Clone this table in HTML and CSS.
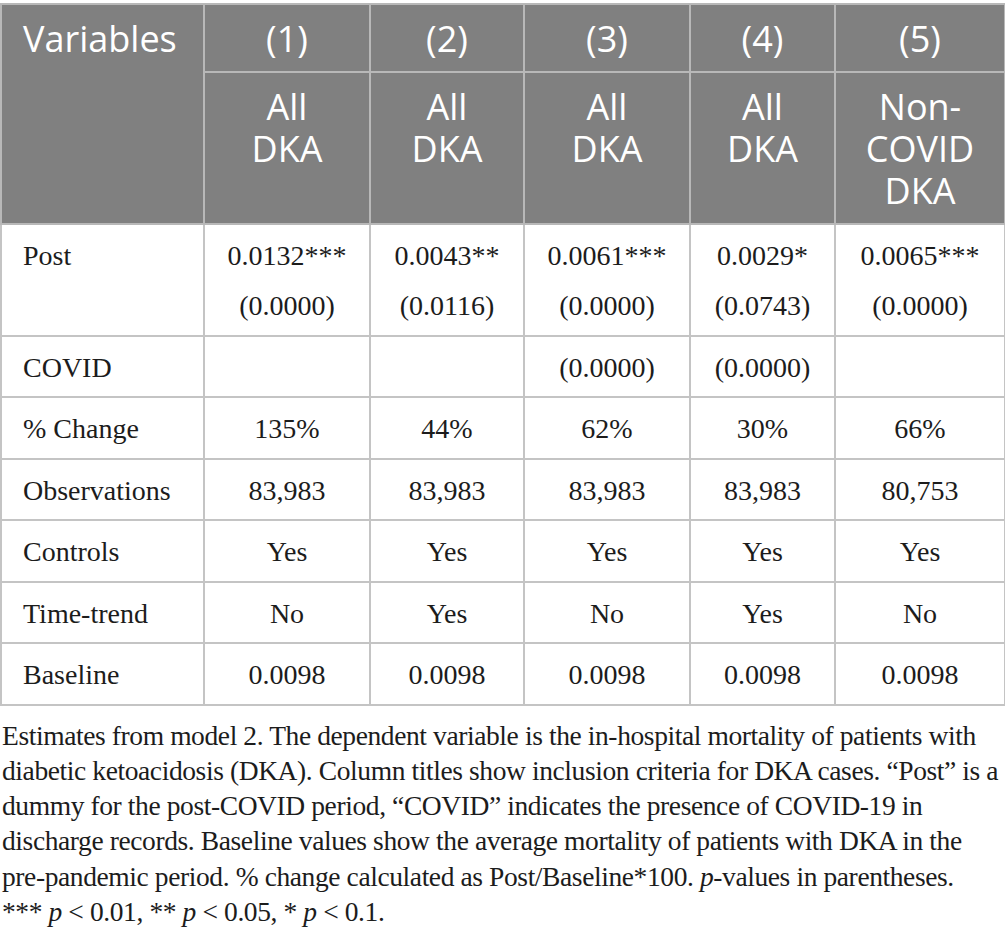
FILE: index.html
```html
<!DOCTYPE html>
<html>
<head>
<meta charset="utf-8">
<link rel="stylesheet" href="styles.css">
</head>
<body>
<div class="page">
  <table class="results">
    <colgroup>
      <col class="c0"><col class="c1"><col class="c2"><col class="c3"><col class="c4"><col class="c5">
    </colgroup>
    <thead>
      <tr class="hrow1">
        <th class="var" rowspan="2">Variables</th>
        <th>(1)</th><th>(2)</th><th>(3)</th><th>(4)</th><th>(5)</th>
      </tr>
      <tr class="hrow2">
        <th>All<br>DKA</th><th>All<br>DKA</th><th>All<br>DKA</th><th>All<br>DKA</th><th>Non-<br>COVID<br>DKA</th>
      </tr>
    </thead>
    <tbody>
      <tr>
        <td class="lbl">Post</td>
        <td>0.0132***<br>(0.0000)</td>
        <td>0.0043**<br>(0.0116)</td>
        <td>0.0061***<br>(0.0000)</td>
        <td>0.0029*<br>(0.0743)</td>
        <td>0.0065***<br>(0.0000)</td>
      </tr>
      <tr>
        <td class="lbl">COVID</td>
        <td></td><td></td><td>(0.0000)</td><td>(0.0000)</td><td></td>
      </tr>
      <tr>
        <td class="lbl">% Change</td>
        <td>135%</td><td>44%</td><td>62%</td><td>30%</td><td>66%</td>
      </tr>
      <tr>
        <td class="lbl">Observations</td>
        <td>83,983</td><td>83,983</td><td>83,983</td><td>83,983</td><td>80,753</td>
      </tr>
      <tr>
        <td class="lbl">Controls</td>
        <td>Yes</td><td>Yes</td><td>Yes</td><td>Yes</td><td>Yes</td>
      </tr>
      <tr>
        <td class="lbl">Time-trend</td>
        <td>No</td><td>Yes</td><td>No</td><td>Yes</td><td>No</td>
      </tr>
      <tr>
        <td class="lbl">Baseline</td>
        <td>0.0098</td><td>0.0098</td><td>0.0098</td><td>0.0098</td><td>0.0098</td>
      </tr>
    </tbody>
  </table>
  <p class="caption">Estimates from model 2. The dependent variable is the in-hospital mortality of patients with<br>diabetic ketoacidosis (DKA). Column titles show inclusion criteria for DKA cases. “Post” is a<br>dummy for the post-COVID period, “COVID” indicates the presence of COVID-19 in<br>discharge records. Baseline values show the average mortality of patients with DKA in the<br>pre-pandemic period. % change calculated as Post/Baseline*100. <i>p</i>-values in parentheses.<br>*** <i>p</i> &lt; 0.01, ** <i>p</i> &lt; 0.05, * <i>p</i> &lt; 0.1.</p>
</div>
</body>
</html>
```

FILE: styles.css
```css
html, body {
  margin: 0;
  padding: 0;
  background: #ffffff;
}

.page {
  padding-top: 3px;
  width: 1005px;
}

.results {
  width: 1004px;
  table-layout: fixed;
  border-collapse: collapse;
  border: 2px solid #c4c4c4;
}

.c0 { width: 203px; }
.c1 { width: 166px; }
.c2 { width: 154px; }
.c3 { width: 166px; }
.c4 { width: 145px; }
.c5 { width: 170px; }

.results th {
  background: #808080;
  color: #ffffff;
  font-family: "Open Sans", "DejaVu Sans", sans-serif;
  font-weight: 400;
  font-size: 36px;
  line-height: 42px;
  text-align: center;
  vertical-align: top;
  border: 2px solid #b8b8b8;
  padding: 13px 8px 11px;
}

.results th.var {
  text-align: left;
  padding-left: 21px;
}

.hrow1 th {
  height: 42px;
}

.hrow2 th {
  height: 126px;
}

.results td {
  font-family: "Liberation Serif", "Times New Roman", serif;
  font-size: 28px;
  line-height: 50px;
  color: #1c1c1c;
  text-align: center;
  vertical-align: top;
  border: 2px solid #c4c4c4;
  padding: 6px 6px 3.5px;
}

.results td.lbl {
  text-align: left;
  padding-left: 21px;
}

.caption {
  margin: 12px 0 0 2px;
  font-family: "Liberation Serif", "Times New Roman", serif;
  font-size: 27.5px;
  line-height: 35.3px;
  color: #1c1c1c;
  letter-spacing: -0.4px;
  white-space: nowrap;
}
```
